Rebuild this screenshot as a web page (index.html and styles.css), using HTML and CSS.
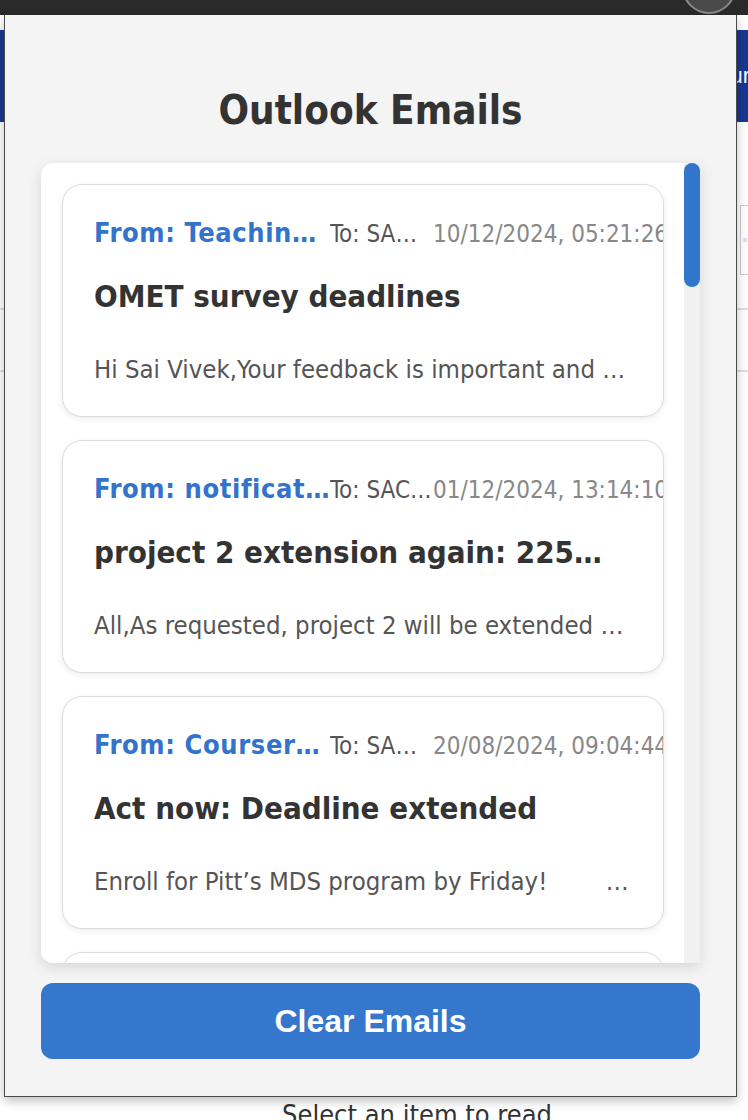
FILE: index.html
```html
<!DOCTYPE html>
<html>
<head>
<meta charset="utf-8">
<link rel="stylesheet" href="styles.css">
</head>
<body>
<div class="page">
  <div class="chrome"><div class="avatar"></div></div>
  <div class="banner"><span class="banner-text">Your</span></div>
  <div class="page-rows">
    <div class="search-box"><svg width="20" height="16" viewBox="0 0 20 16"><path d="M2 3h14M2 8h10M2 13h14" stroke="#7fa6e0" stroke-width="2" fill="none"/></svg></div>
    <div class="row-line first"></div>
    <div class="row-line"></div>
  </div>
  <div class="reading">Select an item to read</div>
</div>

<div class="popup">
  <h1 class="title">Outlook Emails</h1>
  <div class="list">
    <div class="list-scroll">
      <div class="card">
        <div class="meta">
          <span class="from">From: Teaching Center</span>
          <span class="to">To: SAMUEL VIVEK</span>
          <span class="date">10/12/2024, 05:21:26</span>
        </div>
        <h3 class="subject">OMET survey deadlines</h3>
        <p class="snippet">Hi Sai Vivek,Your feedback is important and appreciated</p>
      </div>
      <div class="card">
        <div class="meta">
          <span class="from">From: notifications@instructure.com</span>
          <span class="to">To: SACHDEV</span>
          <span class="date">01/12/2024, 13:14:10</span>
        </div>
        <h3 class="subject">project 2 extension again: 2254 CS 1550</h3>
        <p class="snippet">All,As requested, project 2 will be extended to Friday</p>
      </div>
      <div class="card">
        <div class="meta">
          <span class="from">From: Coursera University</span>
          <span class="to">To: SAMUEL VIVEK</span>
          <span class="date">20/08/2024, 09:04:44</span>
        </div>
        <h3 class="subject">Act now: Deadline extended</h3>
        <p class="snippet">Enroll for Pitt’s MDS program by Friday!&nbsp;&nbsp;&nbsp;&nbsp;&nbsp;&nbsp;&nbsp;&nbsp;&nbsp;&nbsp;&nbsp;&nbsp;&nbsp;&nbsp;&nbsp;&nbsp;&nbsp;&nbsp;&nbsp;&nbsp;&nbsp;&nbsp;&nbsp;&nbsp;&nbsp;&nbsp;&nbsp;&nbsp;&nbsp;&nbsp;</p>
      </div>
      <div class="card">
        <div class="meta">
          <span class="from">From: Someone</span>
          <span class="to">To: SAI</span>
          <span class="date">18/08/2024, 10:00:00</span>
        </div>
        <h3 class="subject">More mail</h3>
        <p class="snippet">Preview text</p>
      </div>
    </div>
    <div class="scrollbar"><div class="thumb"></div></div>
  </div>
  <button class="clear">Clear Emails</button>
</div>
</body>
</html>
```
FILE: styles.css
```css
* { box-sizing: border-box; }
html, body { margin: 0; padding: 0; }
body {
  width: 748px;
  height: 1120px;
  overflow: hidden;
  position: relative;
  background: #ffffff;
  font-family: "DejaVu Sans Condensed", "DejaVu Sans", sans-serif;
}
.page { height: 1120px; background: #ffffff; }
.chrome {
  height: 15px;
  background: #2a2a2a;
  position: relative;
  overflow: hidden;
}
.avatar {
  position: absolute;
  right: 12px;
  top: -40px;
  width: 54px;
  height: 54px;
  border-radius: 50%;
  background: #4a4a4a;
  border: 2px solid #8a8a8a;
}
.banner {
  margin-top: 15px;
  height: 92px;
  background: #1a3893;
  display: flex;
  align-items: center;
  justify-content: flex-end;
}
.banner-text {
  color: #fff;
  font-family: "Liberation Sans", sans-serif;
  font-size: 22px;
  margin-right: -2px;
}
.page-rows { padding-top: 83px; }
.search-box {
  height: 70px;
  margin-left: 740px;
  background: #fff;
  border: 1px solid #ccc;
  border-right: none;
  display: flex;
  align-items: center;
  padding-left: 2px;
}
.row-line { height: 35px; border-bottom: 2px solid #dedede; }
.row-line + .row-line { height: 62px; }
.reading {
  position: absolute;
  left: 0;
  right: 0;
  top: 1099px;
  text-align: center;
  font-size: 27px;
  color: #333;
  padding-left: 86px;
}

.popup {
  position: absolute;
  left: 4px;
  top: 15px;
  width: 733px;
  height: 1082px;
  background: #f4f4f4;
  border: 1px solid #4a4a4a;
  border-top: none;
  box-shadow: 0 4px 10px rgba(0,0,0,0.25);
  padding: 0 36px;
  display: flex;
  flex-direction: column;
}
.title {
  margin: 75px 0 0;
  height: 40px;
  line-height: 40px;
  text-align: center;
  font-size: 40px;
  font-weight: bold;
  color: #333;
}
.list {
  margin-top: 33px;
  height: 800px;
  background: #fff;
  border-radius: 12px 0 0 12px;
  box-shadow: 0 4px 14px rgba(0,0,0,0.12);
  display: flex;
  overflow: hidden;
}
.list-scroll {
  flex: 1;
  padding: 21px 20px 0 21px;
  overflow: hidden;
  display: flex;
  flex-direction: column;
  gap: 23px;
}
.scrollbar {
  width: 16px;
  background: #f1f1f1;
  flex-shrink: 0;
}
.thumb {
  height: 124px;
  background: #3276cc;
  border-radius: 8px;
}
.card {
  flex-shrink: 0;
  height: 233px;
  background: #fff;
  border: 1px solid #dcdcdc;
  border-radius: 20px;
  box-shadow: 0 2px 6px rgba(0,0,0,0.08);
  padding: 33px 0 0 31px;
  overflow: hidden;
}
.meta {
  display: flex;
  align-items: baseline;
  height: 30px;
  line-height: 30px;
  white-space: nowrap;
}
.from, .to {
  overflow: hidden;
  text-overflow: ellipsis;
  flex-shrink: 0;
}
.from {
  width: 236px;
  color: #3273cc;
  font-weight: bold;
  font-size: 27px;
  letter-spacing: 0.6px;
}
.to {
  width: 103px;
  color: #555;
  font-size: 24px;
}
.date {
  color: #888;
  font-size: 24px;
  flex-shrink: 0;
}
.subject {
  margin: 30px 0 0;
  height: 36px;
  line-height: 36px;
  width: 525px;
  font-size: 31px;
  font-weight: bold;
  color: #333;
  white-space: nowrap;
  overflow: hidden;
  text-overflow: ellipsis;
}
.snippet {
  margin: 40px 0 0;
  height: 30px;
  line-height: 30px;
  width: 538px;
  font-size: 25.5px;
  color: #555;
  white-space: nowrap;
  overflow: hidden;
  text-overflow: ellipsis;
}
.clear {
  margin-top: 20px;
  height: 76px;
  border: none;
  border-radius: 12px;
  background: #3577cd;
  color: #fff;
  font-family: "Liberation Sans", Arial, sans-serif;
  font-weight: bold;
  font-size: 32px;
}
```
